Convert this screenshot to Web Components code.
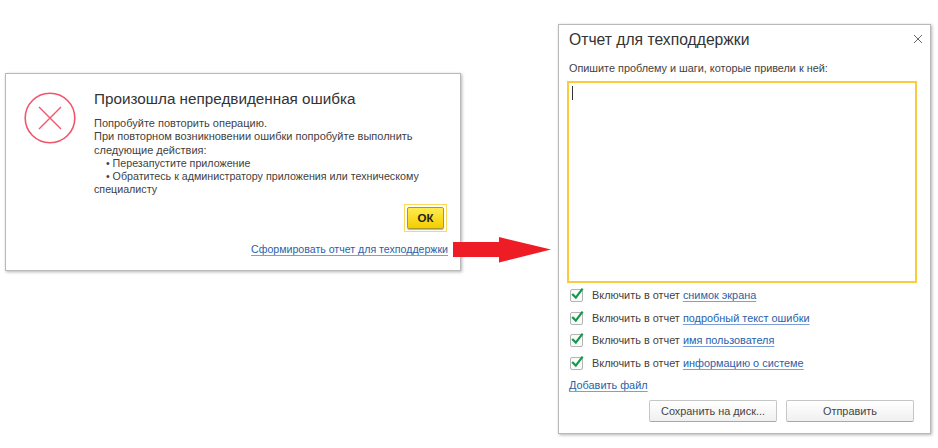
<!DOCTYPE html>
<html lang="ru">
<head>
<meta charset="utf-8">
<title>Отчет для техподдержки</title>
<style>
    html, body { margin: 0; height: 100%; background: #fff; overflow: hidden; }
    body { position: relative; width: 938px; height: 448px; font-family: "Liberation Sans", Arial, sans-serif; color: #333; }
    error-dialog { left: 5px; top: 73px; width: 456px; height: 198px; }
    error-dialog .item { font-size: 10.7px; }
    flow-arrow { left: 453px; top: 237px; }
    report-dialog { left: 558px; top: 24px; width: 373px; height: 410px; }
</style>
</head>
<body>
<error-dialog title-text="Произошла непредвиденная ошибка" link-text="Сформировать отчет для техподдержки">
    Попробуйте повторить операцию.<br>
    При повторном возникновении ошибки попробуйте выполнить следующие действия:<br>
    <span class="item">&nbsp;&nbsp;&nbsp;&nbsp;• Перезапустите приложение</span><br>
    <span class="item">&nbsp;&nbsp;&nbsp;&nbsp;• Обратитесь к администратору приложения или техническому специалисту</span>
</error-dialog>
<flow-arrow></flow-arrow>
<report-dialog title-text="Отчет для техподдержки">
    <report-option link="снимок экрана"></report-option>
    <report-option link="подробный текст ошибки"></report-option>
    <report-option link="имя пользователя"></report-option>
    <report-option link="информацию о системе"></report-option>
</report-dialog>

<script>
const windowStyles = `
    :host{
        position: absolute;
        box-sizing: border-box;
        display: flex;
        flex-direction: column;
        background: #fff;
        border: 1px solid #b9b9b9;
        box-shadow: 1px 1px 3px rgba(0, 0, 0, 0.3);
        font-family: "Liberation Sans", Arial, sans-serif;
        color: #3f3f3f;
    }
    h2{
        margin: 0;
        font-weight: normal;
        color: #333;
    }
    a{
        color: #2a5fa8;
        text-decoration: underline;
        text-decoration-color: #7b9fd6;
        text-underline-offset: 2px;
    }
`;

class ErrorDialog extends HTMLElement {
    constructor() {
        super();
        this.attachShadow({mode: 'open'});
        this.shadowRoot.innerHTML = `
<style>
    ${windowStyles}
    :host{
        padding: 14px 12px 0 18px;
    }
    .top{
        display: flex;
        gap: 18px;
    }
    .text{
        flex: 1;
        padding-top: 1px;
    }
    h2{
        font-size: 15.25px;
        line-height: 20px;
    }
    .message{
        margin-top: 8px;
        font-size: 11px;
        line-height: 13.3px;
        width: 336px;
    }
    .ok-row{
        display: flex;
        justify-content: flex-end;
        margin-top: 7px;
        margin-right: 1px;
    }
    .ok-frame{
        border: 1px solid #fbd75b;
        padding: 2px;
    }
    .ok{
        box-sizing: border-box;
        width: 37px;
        height: 22px;
        display: flex;
        align-items: center;
        justify-content: center;
        border: 1px solid #a89a2b;
        border-radius: 2px;
        background: linear-gradient(#ffec4f, #f5cd00);
        box-shadow: 0 1px 1px rgba(0, 0, 0, 0.3);
        color: #222;
        font-size: 11.5px;
        font-weight: bold;
    }
    .link-row{
        display: flex;
        justify-content: flex-end;
        margin-top: 11px;
        font-size: 10.6px;
    }
    svg{
        display: block;
        flex: none;
        margin-top: 4px;
    }
</style>
<div class="top">
    <svg width="52" height="52" viewBox="0 0 52 52" fill="none" stroke="#f0566c">
        <circle cx="26" cy="26" r="24.8" stroke-width="1.6"/>
        <path d="M15 15L37 37M37 15L15 37" stroke-width="1.4"/>
    </svg>
    <div class="text">
        <h2></h2>
        <div class="message"><slot></slot></div>
    </div>
</div>
<div class="ok-row"><div class="ok-frame"><div class="ok">ОК</div></div></div>
<div class="link-row"><a href="#"></a></div>
`;
        this.shadowRoot.querySelector('h2').textContent = this.getAttribute('title-text');
        this.shadowRoot.querySelector('a').textContent = this.getAttribute('link-text');
    }
}

class FlowArrow extends HTMLElement {
    constructor() {
        super();
        this.attachShadow({mode: 'open'});
        this.shadowRoot.innerHTML = `
<style>
    :host{
        position: absolute;
        display: block;
        width: 98px;
        height: 26px;
    }
    svg{
        display: block;
    }
</style>
<svg width="98" height="26" viewBox="0 0 98 26">
    <path d="M0 5H46V0L98 12.5L46 25.5V20H0Z" fill="#ee1c25"/>
</svg>
`;
    }
}

class ReportOption extends HTMLElement {
    constructor() {
        super();
        this.attachShadow({mode: 'open'});
        this.shadowRoot.innerHTML = `
<style>
    :host{
        display: flex;
        align-items: center;
        gap: 9px;
        height: 22.6px;
        font-size: 10.9px;
        color: #3f3f3f;
    }
    .box{
        position: relative;
        box-sizing: border-box;
        width: 13px;
        height: 13px;
        border: 1px solid #b4b4b4;
        border-radius: 2px;
        background: #fafafa;
        margin-top: 1px;
    }
    svg{
        position: absolute;
        left: -1px;
        top: -4px;
    }
    a{
        color: #2a5fa8;
        text-decoration: underline;
        text-decoration-color: #7b9fd6;
        text-underline-offset: 2px;
    }
</style>
<div class="box">
    <svg width="15" height="15" viewBox="0 0 15 15" fill="none">
        <path d="M2.2 8L5.8 11.6L12.6 2.6" stroke="#12994a" stroke-width="2.2"/>
    </svg>
</div>
<div>Включить в отчет <a href="#"></a></div>
`;
        this.shadowRoot.querySelector('a').textContent = this.getAttribute('link');
    }
}

class ReportDialog extends HTMLElement {
    constructor() {
        super();
        this.attachShadow({mode: 'open'});
        this.shadowRoot.innerHTML = `
<style>
    ${windowStyles}
    :host{
        padding: 5px 13px 0 8px;
    }
    .head{
        display: flex;
        justify-content: space-between;
        padding: 0 0 0 2px;
    }
    h2{
        font-size: 15.7px;
        line-height: 20px;
    }
    .close{
        margin: 3px -7px 0 0;
    }
    .prompt{
        margin: 11px 0 0 2px;
        font-size: 10.85px;
        line-height: 14px;
    }
    .area{
        box-sizing: border-box;
        height: 202px;
        margin-top: 6px;
        border: 2px solid #fbcb3c;
        padding: 3px 3px;
    }
    .caret{
        width: 1px;
        height: 14px;
        background: #333;
    }
    .options{
        margin-top: 1px;
        padding-left: 3px;
    }
    .add{
        margin: 5px 0 0 2px;
        font-size: 10.9px;
    }
    .buttons{
        display: flex;
        justify-content: flex-end;
        gap: 9px;
        margin-top: 9px;
        margin-right: 3px;
    }
    .btn{
        box-sizing: border-box;
        width: 128px;
        height: 22px;
        display: flex;
        align-items: center;
        justify-content: center;
        border: 1px solid #c6c6c6;
        border-bottom-color: #a8a8a8;
        border-radius: 2px;
        background: linear-gradient(#fff, #f0f0f0);
        font-size: 10.9px;
        color: #444;
    }
</style>
<div class="head">
    <h2></h2>
    <svg class="close" width="12" height="12" viewBox="0 0 12 12" fill="none" stroke="#666" stroke-width="1">
        <path d="M2 2L10 10M10 2L2 10"/>
    </svg>
</div>
<div class="prompt">Опишите проблему и шаги, которые привели к ней:</div>
<div class="area"><div class="caret"></div></div>
<div class="options"><slot></slot></div>
<div class="add"><a href="#">Добавить файл</a></div>
<div class="buttons">
    <div class="btn">Сохранить на диск...</div>
    <div class="btn">Отправить</div>
</div>
`;
        this.shadowRoot.querySelector('h2').textContent = this.getAttribute('title-text');
    }
}

window.customElements.define('error-dialog', ErrorDialog);
window.customElements.define('flow-arrow', FlowArrow);
window.customElements.define('report-option', ReportOption);
window.customElements.define('report-dialog', ReportDialog);
</script>
</body>
</html>
